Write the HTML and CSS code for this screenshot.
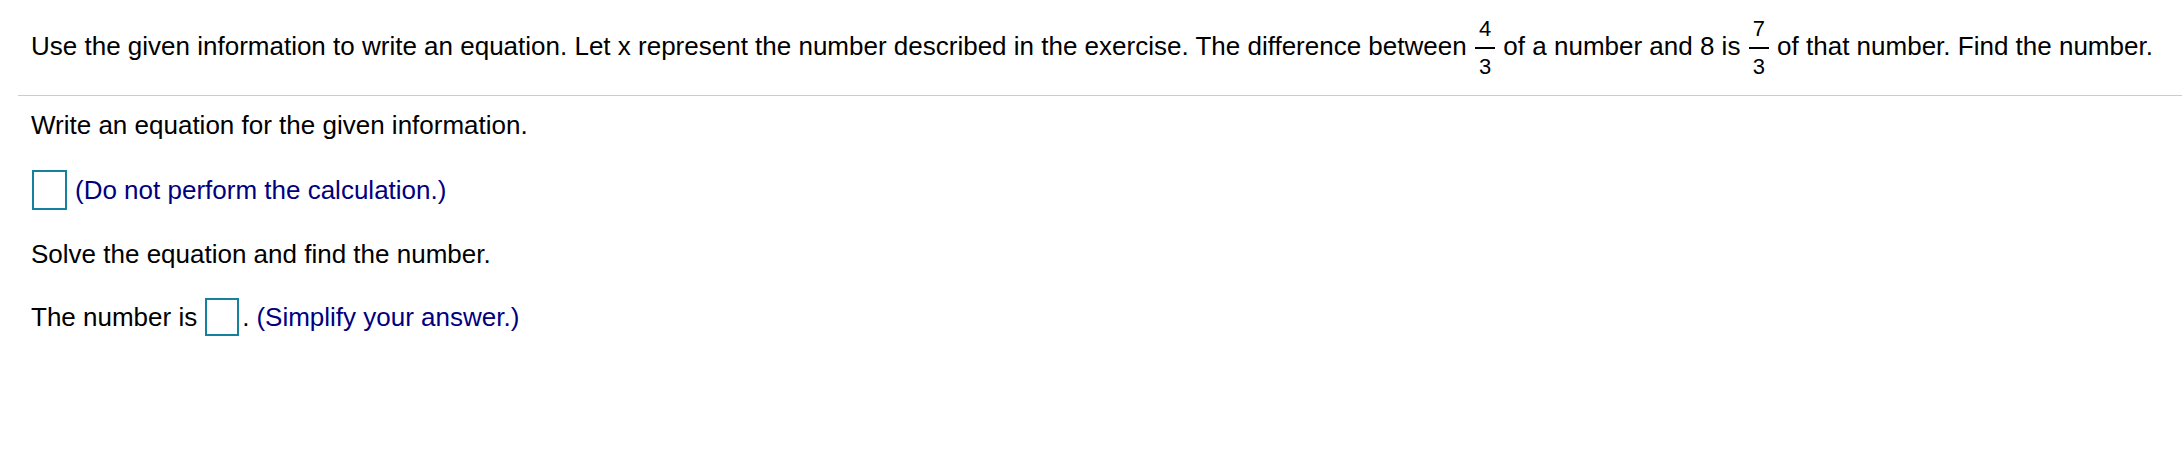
FILE: index.html
```html
<!DOCTYPE html>
<html lang="en">
<head>
<meta charset="utf-8">
<title>Exercise</title>
<link rel="stylesheet" href="styles.css">
</head>
<body>
<div class="question">
  <p class="prompt">Use the given information to write an equation. Let x represent the number described in the exercise. The difference between <span class="frac"><span class="num">4</span><span class="bar"></span><span class="den">3</span></span> of a number and 8 is <span class="frac"><span class="num">7</span><span class="bar"></span><span class="den">3</span></span> of that number. Find the number.</p>
</div>
<div class="rule"></div>
<div class="answer">
  <p class="line first">Write an equation for the given information.</p>
  <div class="row big-row"><span class="box big"></span><span class="hint">(Do not perform the calculation.)</span></div>
  <p class="line">Solve the equation and find the number.</p>
  <div class="row small-row"><span class="label">The number is</span><span class="box small"></span><span class="dot">.</span><span class="hint">(Simplify your answer.)</span></div>
</div>
</body>
</html>
```
FILE: styles.css
```css
html, body {
  margin: 0;
  padding: 0;
  background: #ffffff;
}
body {
  font-family: "Liberation Sans", Arial, sans-serif;
  font-size: 26px;
  color: #000000;
  line-height: 28px;
}
.question {
  padding: 18px 0 0 31px;
}
.prompt {
  margin: 0;
  white-space: nowrap;
}
.frac {
  display: inline-flex;
  flex-direction: column;
  align-items: stretch;
  vertical-align: middle;
  font-size: 22px;
  line-height: 22px;
  text-align: center;
  margin: 0 1px;
}
.num {
  padding: 0 4px 7px;
}
.den {
  padding: 7px 4px 0;
}
.bar {
  height: 2px;
  background: #000000;
}
.rule {
  margin: 17px 0 0 18px;
  height: 1px;
  background: #c7ccd9;
}
.answer {
  padding-left: 31px;
}
.line {
  margin: 30px 0 0;
}
.line.first {
  margin-top: 15px;
}
.row {
  display: flex;
  align-items: center;
  margin-top: 31px;
}
.small-row {
  margin-top: 30px;
}
.box {
  display: inline-block;
  box-sizing: border-box;
  border: 2px solid #16809f;
  background: #ffffff;
}
.box.big {
  width: 35px;
  height: 40px;
  margin-left: 1px;
  margin-right: 8px;
}
.box.small {
  width: 34px;
  height: 38px;
  margin-left: 8px;
  margin-right: 3px;
}
.dot {
  margin-right: 7px;
}
.hint {
  color: #00007f;
}
```
